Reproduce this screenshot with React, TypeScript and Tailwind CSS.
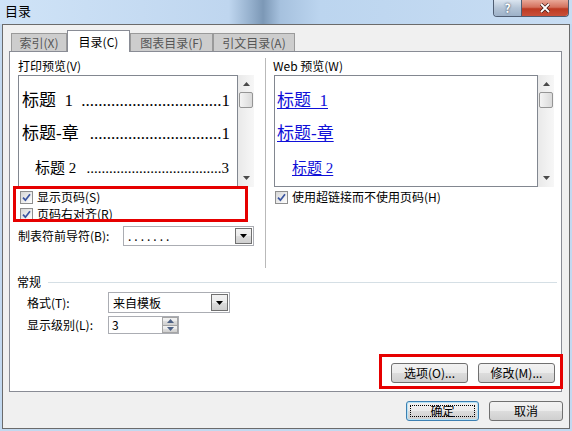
import React from 'react'

const BTN_BG = 'bg-[linear-gradient(180deg,#f2f2f2_0%,#ebebeb_50%,#dddddd_50%,#cfcfcf_100%)]'

function TriDown({ c = '#000' }: { c?: string }) {
  return (
    <svg width="7" height="4" viewBox="0 0 7 4">
      <path d="M0 0H7L3.5 4Z" fill={c} />
    </svg>
  )
}

function TriUp({ c = '#000' }: { c?: string }) {
  return (
    <svg width="7" height="4" viewBox="0 0 7 4">
      <path d="M0 4H7L3.5 0Z" fill={c} />
    </svg>
  )
}

function CheckBox() {
  return (
    <span className="flex h-[13px] w-[13px] shrink-0 items-center justify-center border border-[#8f8f8f] bg-[linear-gradient(135deg,#d6d6d6,#ffffff)]">
      <svg width="9" height="9" viewBox="0 0 9 9">
        <path d="M1 4.6L3.4 7.2L8 1.2" fill="none" stroke="#3b55a0" strokeWidth="1.7" />
      </svg>
    </span>
  )
}

function Check({ label }: { label: string }) {
  return (
    <div className="flex h-[16px] items-center gap-[4px]">
      <CheckBox />
      <span className="whitespace-nowrap text-[12px] leading-[14px]">{label}</span>
    </div>
  )
}

// 右侧竖向滚动条
function ScrollBar() {
  return (
    <div className="flex h-full w-[16px] flex-col items-center bg-[linear-gradient(90deg,#e9e9e9,#f7f7f7)]">
      <div className="flex h-[17px] items-center justify-center">
        <TriUp c="#4a4a4a" />
      </div>
      <div className="h-[16px] w-[14px] rounded-[2px] border border-[#959595] bg-[linear-gradient(90deg,#f4f4f4,#dadada)]" />
      <div className="flex-1" />
      <div className="flex h-[18px] items-center justify-center">
        <TriDown c="#4a4a4a" />
      </div>
    </div>
  )
}

function Dropdown({ value, className, valueClass = '' }: { value: string; className: string; valueClass?: string }) {
  return (
    <div className={`flex items-center border border-[#abadb3] bg-white ${className}`}>
      <span className={`flex-1 whitespace-nowrap pl-[4px] text-[12px] leading-none ${valueClass}`}>{value}</span>
      <span className={`m-px flex h-[calc(100%-2px)] w-[17px] items-center justify-center border border-[#707070] ${BTN_BG}`}>
        <TriDown />
      </span>
    </div>
  )
}

function Btn({ label, w, focus = false }: { label: string; w: string; focus?: boolean }) {
  return (
    <button
      className={`relative flex h-[20px] items-center justify-center rounded-[3px] border text-[12px] leading-none ${w} ${
        focus ? 'border-[#3c7fb1] shadow-[inset_0_0_0_1px_#b6e3f7]' : 'border-[#707070]'
      } ${BTN_BG}`}
    >
      {label}
      {focus && <span className="absolute inset-[3px] border border-dotted border-black" />}
    </button>
  )
}

function Tab({ label, w, active = false }: { label: string; w: string; active?: boolean }) {
  return active ? (
    <div className={`relative z-10 -mb-px flex h-[22px] items-center justify-center border border-b-0 border-[#898c95] bg-white text-[12px] leading-none ${w}`}>
      {label}
    </div>
  ) : (
    <div className={`flex h-[18px] items-center justify-center border border-b-0 border-[#9a9a9a] bg-[#cdcdcd] text-[12px] leading-none text-[#555] ${w}`}>
      {label}
    </div>
  )
}

function TocLine({ title, page, dots, className }: { title: string; page: string; dots: number; className: string }) {
  return (
    <div className={`flex items-center font-['Liberation_Serif','Noto_Sans_CJK_SC',serif] ${className}`}>
      <span className="whitespace-nowrap">{title}</span>
      <span className="flex-1 overflow-hidden whitespace-nowrap text-right">{'.'.repeat(dots)}</span>
      <span>{page}</span>
    </div>
  )
}

function WebLine({ title, className }: { title: string; className: string }) {
  return (
    <div className={`flex items-center font-['Liberation_Serif','Noto_Sans_CJK_SC',serif] text-[#1010d8] ${className}`}>
      <span className="whitespace-nowrap underline decoration-1 underline-offset-2">{title}</span>
    </div>
  )
}

export default function App() {
  return (
    <div className="relative flex h-[431px] w-[572px] flex-col overflow-hidden bg-[#c3d9f0] font-['Noto_Sans_CJK_SC',sans-serif] text-black">
      {/* 标题栏 */}
      <div className="flex h-[24px] shrink-0 items-start bg-[linear-gradient(90deg,#cfe3f7_0%,#bfd6ef_40%,#93aecb_44%,#7c98b6_46%,#a6c1de_49%,#bcd5ef_56%,#c8ddf3_100%)]">
        <span className="pl-[5px] pt-[3px] text-[13px] leading-[16px]">目录</span>
        <div className="ml-auto mr-[3px] flex h-[17px] overflow-hidden rounded-b-[4px] border border-t-0 border-[#4f5d72]">
          <div className="flex w-[28px] items-center justify-center border-r border-[#4f5d72] bg-[linear-gradient(180deg,#dbe5f0,#b4c4d6_50%,#9db1c8)] text-[12px] font-bold leading-none text-white [text-shadow:0_0_2px_#1e2a3a]">
            ?
          </div>
          <div className="flex w-[46px] items-center justify-center bg-[linear-gradient(180deg,#e9a898,#d4715d_45%,#bd3a22_55%,#c9503a)]">
            <svg width="12" height="10" viewBox="0 0 12 10">
              <path d="M2 1L10 9M10 1L2 9" stroke="#3b1510" strokeWidth="3.2" />
              <path d="M2 1L10 9M10 1L2 9" stroke="#ffffff" strokeWidth="1.8" />
            </svg>
          </div>
        </div>
      </div>

      {/* 对话框主体 */}
      <div className="ml-[2px] flex h-[405px] w-[568px] flex-col border border-[#6b6b6b] bg-[#f0f0f0]">
        <div className="flex h-[26px] items-end pl-[8px]">
          <Tab label="索引(X)" w="w-[56px]" />
          <Tab label="目录(C)" w="w-[63px]" active />
          <Tab label="图表目录(F)" w="w-[83px]" />
          <Tab label="引文目录(A)" w="w-[82px]" />
        </div>

        <div className="ml-[6px] flex h-[341px] w-[553px] flex-col border border-[#898c95] bg-white">
          <div className="flex items-start">
            {/* 打印预览 */}
            <div className="ml-[8px] flex w-[236px] flex-col pt-[7px]">
              <span className="h-[14px] text-[12px] leading-[14px]">打印预览(V)</span>
              <div className="mt-[2px] flex h-[112px]">
                <div className="flex w-[220px] flex-col overflow-hidden border border-[#828790] pt-[8px]">
                  <TocLine title={'标题\u00a0\u00a01\u00a0'} page="1" dots={33} className="h-[33px] pl-[3px] pr-[7px] text-[17px]" />
                  <TocLine title={'标题-章\u00a0'} page="1" dots={31} className="h-[33px] pl-[3px] pr-[7px] text-[17px]" />
                  <TocLine title={'标题\u00a02'} page="3" dots={36} className="h-[36px] pl-[16px] pr-[8px] text-[15px]" />
                </div>
                <ScrollBar />
              </div>
              <div className="mt-[2px] pl-[2px]">
                <Check label="显示页码(S)" />
              </div>
              <div className="mt-px pl-[2px]">
                <Check label="页码右对齐(R)" />
              </div>
              <div className="mt-[4px] flex items-center">
                <span className="w-[105px] whitespace-nowrap text-[12px] leading-none">制表符前导符(B):</span>
                <Dropdown value="......." valueClass="tracking-[3px]" className="h-[20px] w-[131px]" />
              </div>
            </div>

            <div className="ml-[11px] mt-[6px] h-[210px] w-px bg-[#b9b9b9]" />

            {/* Web 预览 */}
            <div className="ml-[8px] flex w-[280px] flex-col pt-[7px]">
              <span className="-ml-px h-[14px] text-[12px] leading-[14px]">Web 预览(W)</span>
              <div className="mt-[2px] flex h-[112px]">
                <div className="flex w-[264px] flex-col overflow-hidden border border-[#828790] pt-[8px]">
                  <WebLine title={'标题\u00a0\u00a01'} className="h-[33px] pl-[2px] text-[17px]" />
                  <WebLine title="标题-章" className="h-[33px] pl-[2px] text-[17px]" />
                  <WebLine title={'标题\u00a02'} className="h-[36px] pl-[17px] text-[15px]" />
                </div>
                <ScrollBar />
              </div>
              <div className="mt-[2px] pl-px">
                <Check label="使用超链接而不使用页码(H)" />
              </div>
            </div>
          </div>

          {/* 常规 */}
          <div className="mt-[7px] flex h-[14px] items-center pl-[7px] pr-[4px]">
            <span className="text-[12px] leading-none">常规</span>
            <span className="ml-[7px] h-px flex-1 bg-[#d5dfe5]" />
          </div>
          <div className="mt-[3px] flex items-center pl-[17px]">
            <span className="w-[81px] whitespace-nowrap text-[12px] leading-none">格式(T):</span>
            <Dropdown value="来自模板" className="h-[21px] w-[122px]" />
          </div>
          <div className="mt-[3px] flex items-center pl-[17px]">
            <span className="w-[81px] whitespace-nowrap text-[12px] leading-none">显示级别(L):</span>
            <div className="flex h-[18px] w-[71px] items-center border border-[#abadb3] bg-white">
              <span className="flex-1 pl-[3px] text-[12px] leading-none">3</span>
              <div className="flex h-full w-[16px] flex-col">
                <span className={`flex flex-1 items-center justify-center border border-[#a5a5a5] ${BTN_BG}`}>
                  <TriUp c="#4d6185" />
                </span>
                <span className={`flex flex-1 items-center justify-center border border-t-0 border-[#a5a5a5] ${BTN_BG}`}>
                  <TriDown c="#4d6185" />
                </span>
              </div>
            </div>
          </div>

          <div className="mt-auto flex justify-end gap-[10px] pb-[8px] pr-[6px]">
            <Btn label="选项(O)..." w="w-[77px]" />
            <Btn label="修改(M)..." w="w-[77px]" />
          </div>
        </div>

        <div className="mt-[9px] flex justify-end gap-[10px] pr-[6px]">
          <Btn label="确定" w="w-[73px]" focus />
          <Btn label="取消" w="w-[74px]" />
        </div>
      </div>

      {/* 红色标注框 */}
      <div className="absolute left-[13px] top-[186px] h-[36px] w-[235px] border-[3px] border-[#e60000]" />
      <div className="absolute left-[379px] top-[354px] h-[35px] w-[184px] border-[3px] border-[#e60000]" />
    </div>
  )
}
